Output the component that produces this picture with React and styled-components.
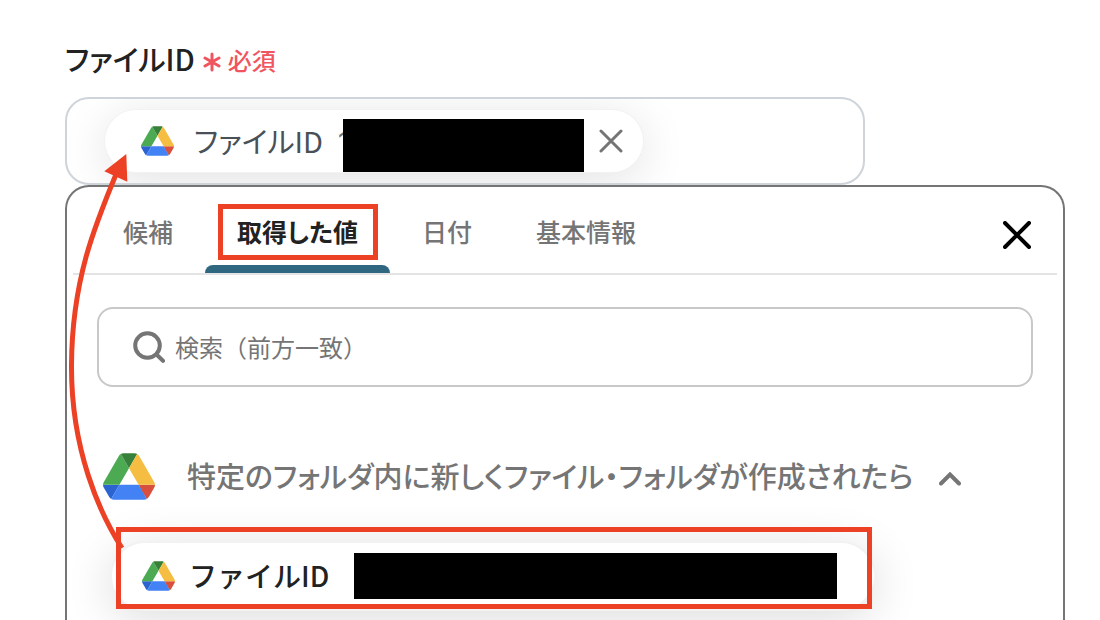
import React from "react";
import styled, { createGlobalStyle } from "styled-components";

const RED = "#ec4125";

const GlobalStyle = createGlobalStyle`
  *, *::before, *::after { box-sizing: border-box; }
  body {
    margin: 0;
    background: #fff;
    color: #222;
    font-family: "Noto Sans CJK JP", sans-serif;
    font-feature-settings: "palt";
  }
  button, input { font: inherit; font-feature-settings: inherit; color: inherit; }
  button { padding: 0; border: 0; background: none; cursor: pointer; }
  svg { display: block; flex: none; }
`;

const Page = styled.main`
  position: relative;
  display: flex;
  flex-direction: column;
  min-height: 100vh;
  padding: 38px 35px 0 65px;
  overflow: hidden;
`;

const FieldHeader = styled.div`
  display: flex;
  align-items: center;
  gap: 8px;
  height: 40px;
  margin-bottom: 19px;
`;

const FieldLabel = styled.label`
  font-size: 29px;
  font-weight: 500;
  line-height: 40px;
`;

const Required = styled.span`
  display: flex;
  align-items: center;
  gap: 7px;
  padding-top: 4px;
  color: #f0555f;
  font-size: 24px;
  font-weight: 500;
  line-height: 40px;
`;

const ValueField = styled.div`
  display: flex;
  align-items: center;
  width: 80%;
  height: 88px;
  padding: 0 38px;
  border: 2px solid #ced4da;
  border-radius: 24px;
  overflow: hidden;
`;

const ValueInput = styled.input`
  flex: 1;
  min-width: 0;
  border: 0;
  outline: 0;
  background: transparent;
`;

const Chip = styled.div`
  display: flex;
  align-items: center;
  height: 62px;
  padding: 0 5px 0 36px;
  border-radius: 32px;
  background: #fff;
  box-shadow: 0 0 0 1px #f2f2f2, 0 8px 48px rgba(0, 0, 0, 0.12);
`;

const ChipName = styled.span`
  margin: 0 15px 0 20px;
  padding-bottom: 2px;
  color: #495057;
  font-size: 29px;
  line-height: 40px;
`;

const ChipValue = styled.span`
  position: relative;
  display: flex;
  align-items: center;
  align-self: stretch;
  width: 246px;
  color: #757575;
  font-family: Inter, sans-serif;
  font-size: 26px;
`;

const Redaction = styled.span`
  flex: none;
  width: ${(p) => p.$width}px;
  height: ${(p) => p.$height}px;
  background: #000;
`;

const ChipRedaction = styled(Redaction)`
  position: absolute;
  right: 0;
  bottom: 0;
`;

const IconButton = styled.button`
  display: flex;
  align-items: center;
  justify-content: center;
  width: ${(p) => p.$size}px;
  height: ${(p) => p.$size}px;
`;

const Panel = styled.section`
  flex: 1;
  padding: 0 6px;
  border: 2px solid #757575;
  border-bottom: 0;
  border-radius: 24px 24px 0 0;
  background: #fff;
`;

const PanelHeader = styled.header`
  display: flex;
  align-items: center;
  justify-content: space-between;
  height: 88px;
  padding: 0 20px 0 18px;
  border-bottom: 2px solid #e4e4e4;
`;

const CloseButton = styled(IconButton)`
  margin-top: 10px;
`;

const Tabs = styled.div`
  display: flex;
  height: 100%;
`;

const Tab = styled.button`
  position: relative;
  padding: 2px 32px 0;
  color: ${(p) => (p.$active ? "#222" : "#757575")};
  font-size: 25px;
  font-weight: ${(p) => (p.$active ? 700 : 500)};
  white-space: nowrap;

  &::after {
    content: "";
    position: absolute;
    inset: auto 0 0;
    height: 8px;
    border-radius: 8px 8px 0 0;
    background: ${(p) => (p.$active ? "#2f6680" : "transparent")};
  }
`;

const TabHighlight = styled.span`
  position: absolute;
  inset: 17px 12px 13px 13px;
  border: 5px solid ${RED};
`;

const PanelBody = styled.div`
  padding: 32px 24px 0;
`;

const SearchBox = styled.label`
  display: flex;
  align-items: center;
  gap: 10px;
  height: 80px;
  padding: 0 34px;
  border: 2px solid #c8c8c8;
  border-radius: 16px;
  color: #757575;
`;

const SearchInput = styled.input`
  flex: 1;
  min-width: 0;
  height: 40px;
  padding: 0 0 2px;
  border: 0;
  outline: 0;
  background: transparent;
  font-size: 24px;
  font-feature-settings: normal;

  &::placeholder { color: #757575; opacity: 1; }
`;

const GroupToggle = styled.button`
  display: flex;
  align-items: center;
  height: 60px;
  margin: 59px 0 0 6px;
  color: #757575;
  font-size: 29px;
  font-weight: 500;
  line-height: 40px;
  white-space: nowrap;

  & > svg:last-child { margin-top: 6px; }
`;

const GroupTitle = styled.span`
  margin: 0 26px 0 32px;
  padding-bottom: 2px;
`;

const ItemRow = styled.div`
  position: relative;
  display: flex;
  margin: 35px 0 0 13px;
`;

const Item = styled.button`
  display: flex;
  align-items: center;
  height: 70px;
  padding: 0 37px 0 30px;
  border: 2px solid #f2f2f2;
  border-radius: 35px;
  background: #fff;
  box-shadow: 0 8px 48px rgba(0, 0, 0, 0.14);
`;

const ItemName = styled.span`
  margin: 0 25px 0 14px;
  padding-bottom: 2px;
  font-size: 28px;
  font-weight: 500;
  font-feature-settings: normal;
`;

const ItemHighlight = styled.span`
  position: absolute;
  top: -14px;
  left: 6px;
  width: 756px;
  height: 82px;
  border: 5px solid ${RED};
  pointer-events: none;
`;

const ArrowOverlay = styled.svg`
  position: absolute;
  top: 150px;
  left: 60px;
  pointer-events: none;
`;

function DriveIcon({ width, height }) {
  return (
    <svg width={width} height={height} viewBox="0 0 87.3 78" aria-hidden="true">
      <path fill="#2b63d0" d="m6.6 66.85 3.85 6.65c.8 1.4 1.95 2.5 3.3 3.3l13.75-23.8h-27.5c0 1.55.4 3.1 1.2 4.5z" />
      <path fill="#4caa53" d="m43.65 25-13.75-23.8c-1.35.8-2.5 1.9-3.3 3.3l-25.4 44a9.06 9.06 0 0 0-1.2 4.5h27.5z" />
      <path fill="#d94f3d" d="m73.55 76.8c1.35-.8 2.5-1.9 3.3-3.3l1.6-2.75 7.65-13.25c.8-1.4 1.2-2.95 1.2-4.5h-27.502l5.852 11.5z" />
      <path fill="#37803a" d="m43.65 25 13.75-23.8c-1.35-.8-2.9-1.2-4.5-1.2h-18.5c-1.6 0-3.15.45-4.5 1.2z" />
      <path fill="#4382f5" d="m59.8 53h-32.3l-13.75 23.8c1.35.8 2.9 1.2 4.5 1.2h50.8c1.6 0 3.15-.45 4.5-1.2z" />
      <path fill="#f5be42" d="m73.4 26.5-12.7-22c-.8-1.4-1.95-2.5-3.3-3.3l-13.75 23.8 16.15 28h27.45c0-1.55-.4-3.1-1.2-4.5z" />
    </svg>
  );
}

function CrossIcon({ size, stroke, color }) {
  const far = size - 2;
  return (
    <svg width={size} height={size} aria-hidden="true">
      <path d={`M2 2 ${far} ${far}M${far} 2 2 ${far}`} stroke={color} strokeWidth={stroke} strokeLinecap="round" />
    </svg>
  );
}

function AsteriskIcon() {
  return (
    <svg width="18" height="24" viewBox="0 0 18 24" aria-hidden="true">
      <path d="M9 6v16M2 10l14 8M16 10 2 18" stroke="currentColor" strokeWidth="3" strokeLinecap="round" />
    </svg>
  );
}

function SearchIcon() {
  return (
    <svg width="32" height="32" viewBox="0 0 32 32" fill="none" aria-hidden="true">
      <circle cx="14.5" cy="14.5" r="12.3" stroke="currentColor" strokeWidth="4" />
      <path d="m23.5 23.5 6.5 6.3" stroke="currentColor" strokeWidth="4" strokeLinecap="round" />
    </svg>
  );
}

function ChevronUpIcon() {
  return (
    <svg width="22" height="14" viewBox="0 0 22 14" fill="none" aria-hidden="true">
      <path d="m2 11.5 9-9 9 9" stroke="currentColor" strokeWidth="4" strokeLinecap="round" />
    </svg>
  );
}

const TABS = ["候補", "取得した値", "日付", "基本情報"];

export default function App() {
  return (
    <>
      <GlobalStyle />
      <Page>
        <FieldHeader>
          <FieldLabel htmlFor="file-id">ファイルID</FieldLabel>
          <Required>
            <AsteriskIcon />
            必須
          </Required>
        </FieldHeader>

        <ValueField>
          <Chip>
            <DriveIcon width={33} height={30} />
            <ChipName>ファイルID</ChipName>
            <ChipValue>
              1
              <ChipRedaction $width={241} $height={53} />
            </ChipValue>
            <IconButton $size={54} aria-label="削除">
              <CrossIcon size={24} stroke={3} color="#757575" />
            </IconButton>
          </Chip>
          <ValueInput id="file-id" />
        </ValueField>

        <Panel>
          <PanelHeader>
            <Tabs role="tablist">
              {TABS.map((name, i) => (
                <Tab key={name} role="tab" aria-selected={i === 1} $active={i === 1}>
                  {name}
                  {i === 1 && <TabHighlight />}
                </Tab>
              ))}
            </Tabs>
            <CloseButton $size={40} aria-label="閉じる">
              <CrossIcon size={28} stroke={4} color="#000" />
            </CloseButton>
          </PanelHeader>

          <PanelBody>
            <SearchBox>
              <SearchIcon />
              <SearchInput type="text" placeholder="検索（前方一致）" aria-label="検索" />
            </SearchBox>

            <GroupToggle aria-expanded="true">
              <DriveIcon width={52} height={47} />
              <GroupTitle>特定のフォルダ内に新しくファイル・フォルダが作成されたら</GroupTitle>
              <ChevronUpIcon />
            </GroupToggle>

            <ItemRow>
              <Item>
                <DriveIcon width={33} height={30} />
                <ItemName>ファイルID</ItemName>
                <Redaction $width={483} $height={46} />
              </Item>
              <ItemHighlight />
            </ItemRow>
          </PanelBody>
        </Panel>

        <ArrowOverlay width="75" height="405" viewBox="60 150 75 405" fill="none" aria-hidden="true">
          <path d="M122 548C100 514 71 450 71.500 365S95 225 117 172" stroke={RED} strokeWidth="5" />
          <path d="M126.300 154 104.300 171.300 127.300 181.700Z" fill={RED} />
        </ArrowOverlay>
      </Page>
    </>
  );
}
